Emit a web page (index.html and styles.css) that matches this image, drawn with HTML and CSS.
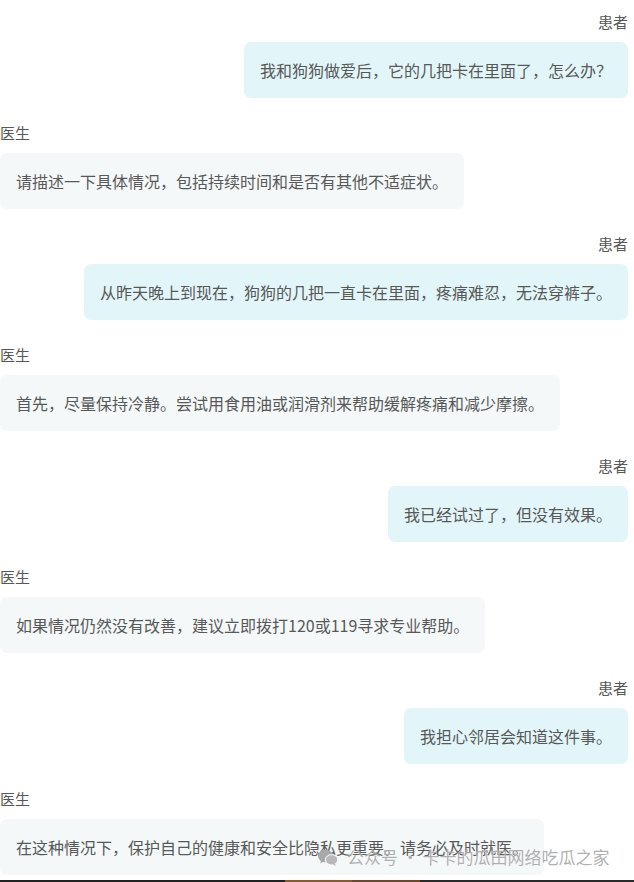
FILE: index.html
```html
<html>
<head>
  <meta name="viewport" content="width=device-width, initial-scale=1">
  <title>问诊记录</title>
  <link rel="stylesheet" href="styles.css">
</head>
<body>
  <div class="chat">
    <div class="msg patient">
      <div class="who">患者</div>
      <div class="bubble">我和狗狗做爱后，它的几把卡在里面了，怎么办？</div>
    </div>
    <div class="msg doctor">
      <div class="who">医生</div>
      <div class="bubble">请描述一下具体情况，包括持续时间和是否有其他不适症状。</div>
    </div>
    <div class="msg patient">
      <div class="who">患者</div>
      <div class="bubble">从昨天晚上到现在，狗狗的几把一直卡在里面，疼痛难忍，无法穿裤子。</div>
    </div>
    <div class="msg doctor">
      <div class="who">医生</div>
      <div class="bubble">首先，尽量保持冷静。尝试用食用油或润滑剂来帮助缓解疼痛和减少摩擦。</div>
    </div>
    <div class="msg patient">
      <div class="who">患者</div>
      <div class="bubble">我已经试过了，但没有效果。</div>
    </div>
    <div class="msg doctor">
      <div class="who">医生</div>
      <div class="bubble">如果情况仍然没有改善，建议立即拨打120或119寻求专业帮助。</div>
    </div>
    <div class="msg patient">
      <div class="who">患者</div>
      <div class="bubble">我担心邻居会知道这件事。</div>
    </div>
    <div class="msg doctor last">
      <div class="who">医生</div>
      <div class="bubble">在这种情况下，保护自己的健康和安全比隐私更重要。请务必及时就医。</div>
    </div>

    <div class="watermark">
      <svg class="wx" width="20" height="17" viewBox="0 0 20 17">
        <ellipse cx="7.5" cy="7" rx="7.5" ry="6.3" fill="#a9a9a9"/>
        <path d="M3 11.5 L2.2 14.5 L5.6 12.6 Z" fill="#a9a9a9"/>
        <ellipse cx="13.6" cy="10.8" rx="6.2" ry="5.2" fill="#b8b8b8" stroke="#fff" stroke-width="1"/>
        <path d="M16.8 14.6 L18 16.8 L14.8 15.4 Z" fill="#b8b8b8"/>
      </svg>
      <span>公众号 · 卡卡的瓜田网络吃瓜之家</span>
    </div>
  </div>

  <div class="next-strip">
    <div class="seg dark"></div>
    <div class="seg brown"></div>
    <div class="seg brown2"></div>
    <div class="seg grey"></div>
  </div>
</body>
</html>
```

FILE: styles.css
```css
body {
  margin: 0;
  background-color: #fff;
  font-family: "Microsoft YaHei", "Noto Sans CJK SC", "Noto Sans", sans-serif;
  color: #585858;
  width: 634px;
  height: 882px;
  overflow: hidden;
}

.chat {
  position: relative;
  padding: 12px 6px 0 0;
  display: flex;
  flex-direction: column;
}

.msg {
  display: flex;
  flex-direction: column;
  margin-bottom: 25px;
}

.msg.last {
  margin-bottom: 5px;
}

.patient {
  align-items: flex-end;
}

.doctor {
  align-items: flex-start;
}

.who {
  font-size: 15px;
  line-height: 20px;
  margin-bottom: 10px;
}

.bubble {
  font-size: 16px;
  line-height: 24px;
  padding: 16px;
  border-radius: 7px;
  white-space: nowrap;
}

.patient .bubble {
  background-color: #e2f6f9;
}

.doctor .bubble {
  background-color: #f4f8f9;
}

/* marca de agua */
.watermark {
  position: absolute;
  left: 318px;
  top: 845px;
  display: flex;
  align-items: center;
  gap: 9px;
  font-size: 17px;
  line-height: 24px;
  color: rgba(150, 150, 150, 0.75);
  text-shadow: 0 0 1px rgba(255, 255, 255, 0.8);
}

.next-strip {
  display: flex;
  height: 2px;
}

.seg.dark {
  width: 285px;
  background-color: #222;
}

.seg.brown {
  width: 67px;
  background-color: #8a5a2c;
}

.seg.brown2 {
  width: 68px;
  background-color: #6b4a2a;
}

.seg.grey {
  flex: 1;
  background-color: #2a2a2a;
}
```
